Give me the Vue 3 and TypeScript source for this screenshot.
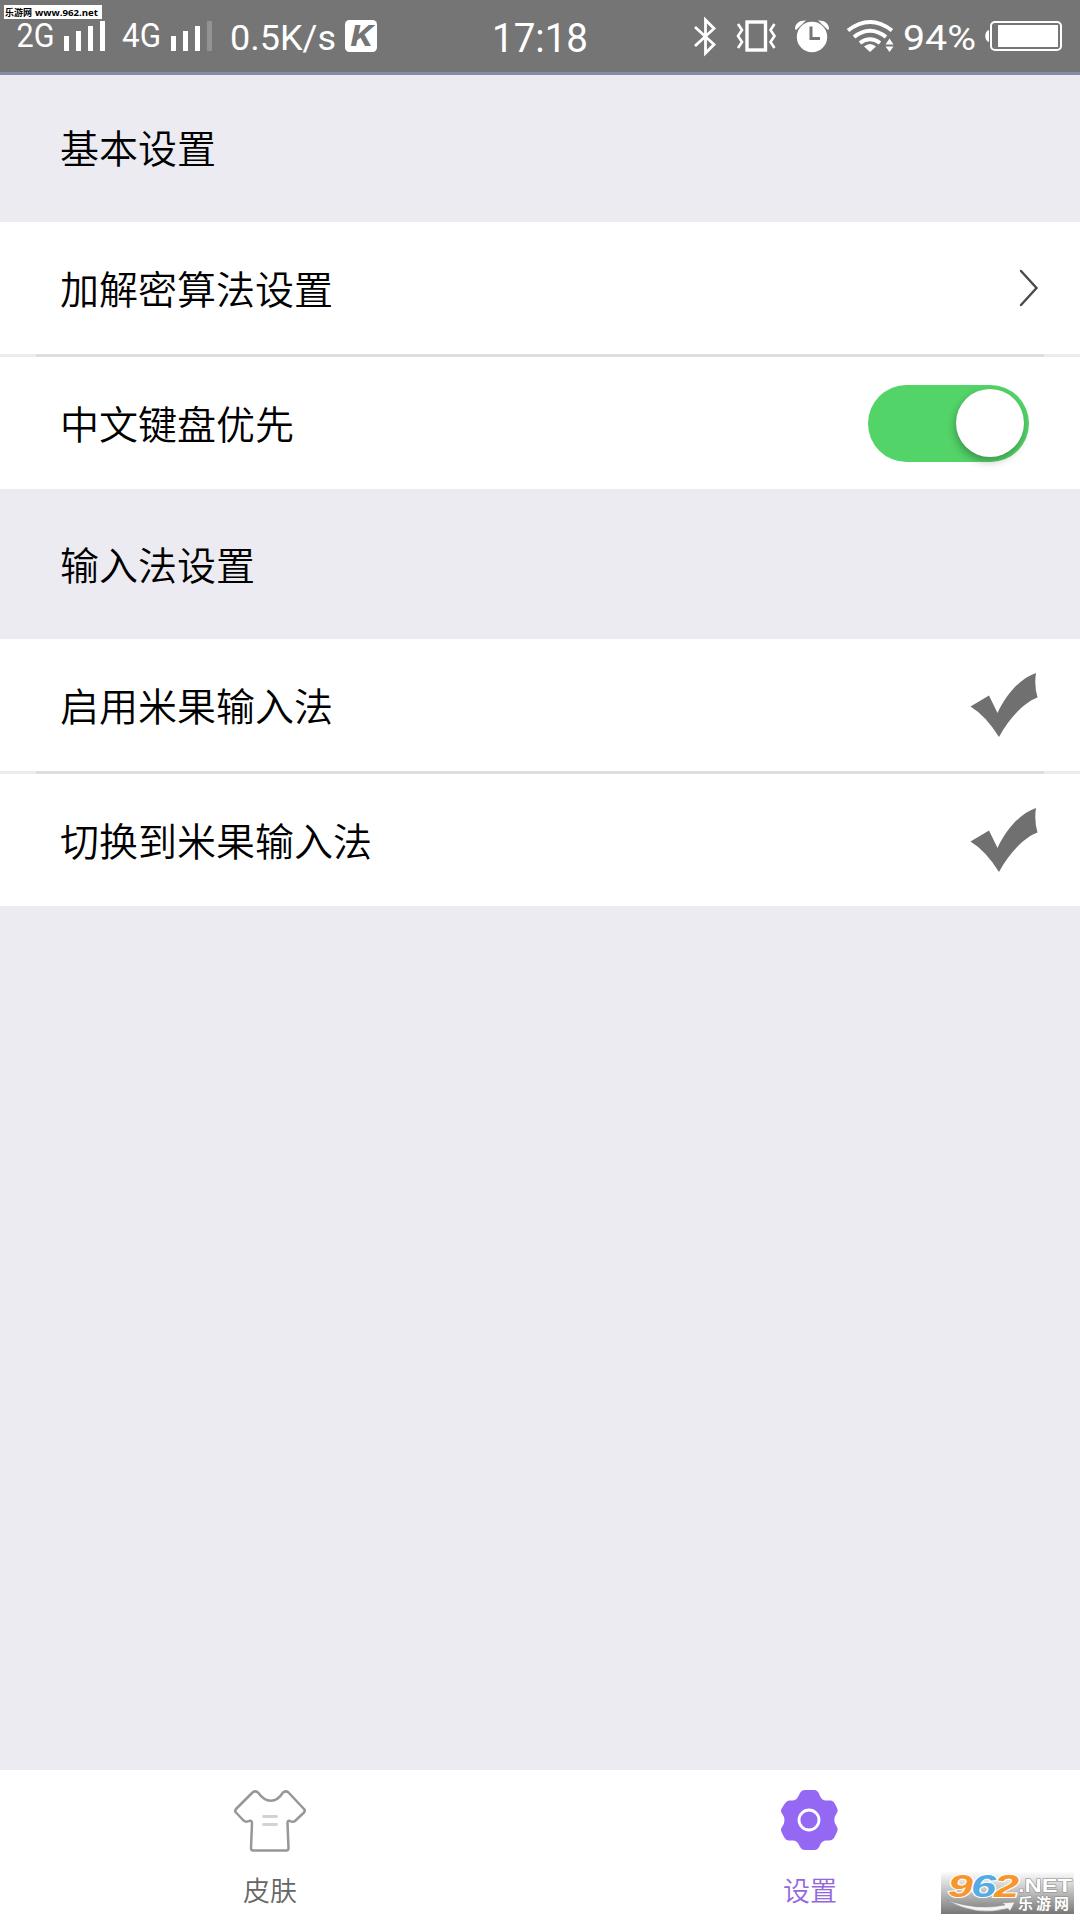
<script setup lang="ts">
import { ref } from 'vue'

interface Row {
  id: string
  label: string
  kind: 'link' | 'switch' | 'check'
}

interface Section {
  title: string
  rows: Row[]
}

const chineseFirst = ref(true)

const sections: Section[] = [
  {
    title: '基本设置',
    rows: [
      { id: 'crypto', label: '加解密算法设置', kind: 'link' },
      { id: 'chinese', label: '中文键盘优先', kind: 'switch' },
    ],
  },
  {
    title: '输入法设置',
    rows: [
      { id: 'enable', label: '启用米果输入法', kind: 'check' },
      { id: 'switch', label: '切换到米果输入法', kind: 'check' },
    ],
  },
]
</script>

<template>
  <div class="screen">
    <header class="status">
      <div class="side">
        <svg class="net" width="98" height="72" viewBox="12 0 98 72">
          <text x="16.500" y="47" font-size="32.500" textLength="38" lengthAdjust="spacingAndGlyphs">2G</text>
          <path d="M64 36h5v15h-5zM76 31h5v20h-5zM88 26h5v25h-5zM100 21h5v30h-5z" />
        </svg>
        <svg class="net" width="110" height="72" viewBox="110 0 110 72">
          <text x="122" y="47" font-size="32.500" textLength="39" lengthAdjust="spacingAndGlyphs">4G</text>
          <path d="M171 36h5v15h-5zM183 31h5v20h-5zM195 26h5v25h-5z" />
          <path d="M207 21h5v30h-5z" fill="#929292" />
        </svg>
        <svg width="118" height="72" viewBox="220 0 118 72">
          <text x="230" y="50" font-size="35" textLength="106" lengthAdjust="spacingAndGlyphs">0.5K/s</text>
        </svg>
        <svg width="44" height="72" viewBox="338 0 44 72">
          <rect x="345" y="20" width="32" height="32" rx="4.500" />
          <text class="badge" x="350.500" y="46" font-size="29" textLength="22" lengthAdjust="spacingAndGlyphs">K</text>
        </svg>
      </div>
      <svg class="clock" width="100" height="72" viewBox="490 0 100 72">
        <text x="492" y="52" font-size="40" textLength="96" lengthAdjust="spacingAndGlyphs">17:18</text>
      </svg>
      <div class="side right">
        <svg width="42" height="72" viewBox="688 0 42 72">
          <path d="M695 27L714 44.500L705.500 53V20L714 28.500L695 46" fill="none" stroke="#fff" stroke-width="2.800" />
        </svg>
        <svg width="57" height="72" viewBox="730 0 57 72">
          <rect x="747" y="22" width="18.500" height="28" fill="none" stroke="#fff" stroke-width="3.400" />
          <path d="M738 24l4 6-4 6 4 6-4 6M774.500 24l-4 6 4 6-4 6 4 6" fill="none" stroke="#fff" stroke-width="2.600" />
        </svg>
        <svg width="53" height="72" viewBox="787 0 53 72">
          <path d="M795 29c0-6 5-9 11-8.500l-10 9.500zM829 29c0-6-5-9-11-8.500l10 9.500z" />
          <circle cx="812" cy="37" r="15.200" />
          <path d="M811 26.500V38.500H820" fill="none" stroke="#757575" stroke-width="3" />
        </svg>
        <svg width="61" height="72" viewBox="840 0 61 72">
          <path d="M848 30.500Q870 13.500 892 30.500M854 37Q870 24.500 886 37M860 43Q870 35.500 880 43" fill="none" stroke="#fff" stroke-width="4" />
          <path d="M864 46.500Q870 41.500 876 46.500L870 52zM885.500 44.500L889.500 38.500L893.500 44.500zM885.500 46.500L889.500 52L893.500 46.500z" />
        </svg>
        <svg width="81" height="72" viewBox="901 0 81 72">
          <text x="903" y="50" font-size="35" textLength="73" lengthAdjust="spacingAndGlyphs">94%</text>
        </svg>
        <svg width="84" height="72" viewBox="982 0 84 72">
          <rect x="991" y="22" width="70" height="28" rx="4" fill="none" stroke="#fff" stroke-width="2" />
          <rect x="998" y="25" width="60" height="22" />
          <path d="M989 30v12c-5-1-5-11 0-12z" />
        </svg>
      </div>
      <div class="stamp">
        <svg width="98" height="14" viewBox="4 5 98 14">
          <text x="5" y="16" font-size="9" textLength="27">乐游网</text>
          <text x="35" y="16" font-size="9.500" textLength="63" lengthAdjust="spacingAndGlyphs">www.962.net</text>
        </svg>
      </div>
    </header>

    <main class="content">
      <section v-for="section in sections" :key="section.title" class="section">
        <h2 class="title">{{ section.title }}</h2>
        <div v-for="row in section.rows" :key="row.id" class="row">
          <span class="label">{{ row.label }}</span>
          <svg v-if="row.kind === 'link'" class="chevron" width="20" height="38" viewBox="0 0 20 38">
            <path d="M2 2L17.500 19L2 36" fill="none" stroke="#4a4a4a" stroke-width="2.400" stroke-linecap="round" />
          </svg>
          <button
            v-else-if="row.kind === 'switch'"
            class="switch"
            :class="{ on: chineseFirst }"
            @click="chineseFirst = !chineseFirst"
          >
            <span class="knob"></span>
          </button>
          <svg v-else class="check" width="68" height="66" viewBox="0 -1 68 66">
            <path d="M.5 33.500L19 22.500L27.500 40C37 20 51 5 66 0Q64 12 67.500 24.500C53 30 39 46 29 64Q16 43 .5 33.500z" fill="#707070" />
          </svg>
        </div>
      </section>
    </main>

    <nav class="tabs">
      <a class="tab">
        <svg width="72" height="64" viewBox="1 1 72 64">
          <path d="M19 4Q21.500 1 25 3.500C33 14.500 43 14.500 50 3.500Q53.500 1 56 4L71 20Q72.500 21.500 71 23.500L62 32Q60 33.500 57 32Q54.500 31 54.500 34L55.500 59Q55.500 61.500 53.500 61.500H20Q18 61.500 18 59L19 34Q19 31 16 32Q13 33.500 10.500 31.500L3 23.500Q1.500 22 3 20z" fill="none" stroke="#979797" stroke-width="2.500" stroke-linejoin="round" />
          <path d="M30.500 27.500H43.500M30.500 35.500H43.500" stroke="#d2d2d2" stroke-width="2.800" stroke-linecap="round" />
        </svg>
        <span>皮肤</span>
      </a>
      <a class="tab active">
        <svg width="58" height="64" viewBox="1 1 58 64">
          <path d="M19 6Q21 1 25 1H34Q38 1 39.500 6Q41.500 11.500 46 11.500H50Q53 11 55 15L57 19Q58.500 22 56.500 24.500Q52 31 56.500 37Q58.500 40 57 43L54 49Q52 51.500 49 51.500H46Q42 51.500 40 56Q38.500 61 34 61H25Q21 61 19 56Q17 51.500 13 51.500H9Q6 51.500 4 48L2 44Q0 40.500 2 38Q7 31 2 24.500Q0 22 2 19L4.500 15Q7 11 9.500 11.500H13Q17 11 19 6z" fill="#9468f2" />
          <circle cx="29" cy="31" r="10" fill="none" stroke="#fff" stroke-width="2.800" />
        </svg>
        <span>设置</span>
      </a>
    </nav>

    <div class="brand">
      <svg width="133" height="43" viewBox="0 0 133 43">
        <g class="num">
          <text x="7" y="26" font-size="31" textLength="25" lengthAdjust="spacingAndGlyphs" fill="#f7962d">9</text>
          <text x="30" y="26" font-size="31" textLength="25" lengthAdjust="spacingAndGlyphs" fill="#55abe4">6</text>
          <text x="53" y="26" font-size="31" textLength="25" lengthAdjust="spacingAndGlyphs" fill="#f7962d">2</text>
        </g>
        <text class="net-word" x="77" y="21" font-size="19" textLength="54" lengthAdjust="spacingAndGlyphs">.NET</text>
        <text class="cn-word" x="77" y="37.500" font-size="15" textLength="51" lengthAdjust="spacing">乐游网</text>
        <path d="M6 29Q36 40 64 34L61 32L74 31L69 40L67 37.500Q34 46 6 29z" fill="#f4f4f4" stroke="#888" stroke-width=".5" />
      </svg>
    </div>
  </div>
</template>

<style>
body {
  margin: 0;
}
</style>

<style scoped>
.screen {
  position: relative;
  display: flex;
  flex-direction: column;
  width: 1080px;
  height: 1920px;
  overflow: hidden;
  background: #ecebf2;
  font-family: "Noto Sans CJK SC", sans-serif;
  color: #000;
}

svg {
  display: block;
  flex: none;
}

.status {
  position: relative;
  display: flex;
  align-items: flex-start;
  box-sizing: border-box;
  height: 75px;
  padding: 0 14px 0 12px;
  background: #757575;
  border-bottom: 3px solid #888ba7;
  font-family: Roboto, sans-serif;
  fill: #fff;
}

.side {
  display: flex;
  width: 478px;
}

.right {
  flex: 1;
  width: auto;
  margin-left: 98px;
}

.badge {
  fill: #757575;
  font-weight: 700;
  font-style: italic;
}

.stamp {
  position: absolute;
  left: 4px;
  top: 5px;
  background: #fff;
  fill: #000;
  font-family: "Open Sans", "Noto Sans CJK SC", sans-serif;
  font-weight: 700;
}

.content {
  flex: 1;
}

.title {
  display: flex;
  align-items: center;
  box-sizing: border-box;
  height: 147px;
  margin: 0;
  padding: 0 60px 5px;
  font-size: 39px;
  line-height: 56px;
  font-weight: 350;
}

.section + .section .title {
  height: 150px;
  padding-bottom: 3px;
}

.row {
  display: flex;
  align-items: center;
  justify-content: space-between;
  height: 132px;
  padding-left: 60px;
  background: #fff;
  font-size: 39px;
  line-height: 56px;
  font-weight: 350;
}

.row + .row {
  padding-top: 3px;
  background:
    linear-gradient(90deg, #ecebf0 36px, #dedde2 36px, #dedde2 1044px, #ecebf0 1044px) top / 100% 3px no-repeat,
    #fff;
}

.label {
  padding-bottom: 2px;
}

.chevron {
  margin-right: 41px;
}

.switch {
  display: flex;
  box-sizing: border-box;
  width: 161px;
  height: 77px;
  margin-right: 51px;
  padding: 4.5px 5px;
  border: 0;
  border-radius: 39px;
  background: #d8d8d8;
}

.switch.on {
  justify-content: flex-end;
  background: #53d469;
}

.knob {
  width: 68px;
  height: 68px;
  border-radius: 50%;
  background: #fff;
  box-shadow: -1px 4px 8px rgba(0, 0, 0, 0.3);
}

.check {
  margin-right: 42px;
}

.tabs {
  display: flex;
  height: 150px;
  background: #fff;
}

.tab {
  display: flex;
  flex: 1;
  flex-direction: column;
  align-items: center;
  padding-top: 20px;
  font-size: 27px;
  line-height: 40px;
  font-weight: 350;
  color: #666;
}

.tab span {
  margin-top: 16px;
}

.tab.active {
  color: #9468dc;
}

.brand {
  position: absolute;
  left: 941px;
  top: 1871px;
  background: linear-gradient(#fff, #c4c4c4 45%, #777);
}

.brand svg {
  overflow: visible;
}

.num {
  font-family: "Liberation Sans", sans-serif;
  font-weight: 700;
  font-style: italic;
  stroke: #fff;
  stroke-width: 2px;
  paint-order: stroke;
}

.net-word,
.cn-word {
  fill: #fff;
  stroke: #888;
  stroke-width: 1px;
  paint-order: stroke;
  font-family: "Liberation Sans", "Noto Sans CJK SC", sans-serif;
  font-weight: 700;
}
</style>
